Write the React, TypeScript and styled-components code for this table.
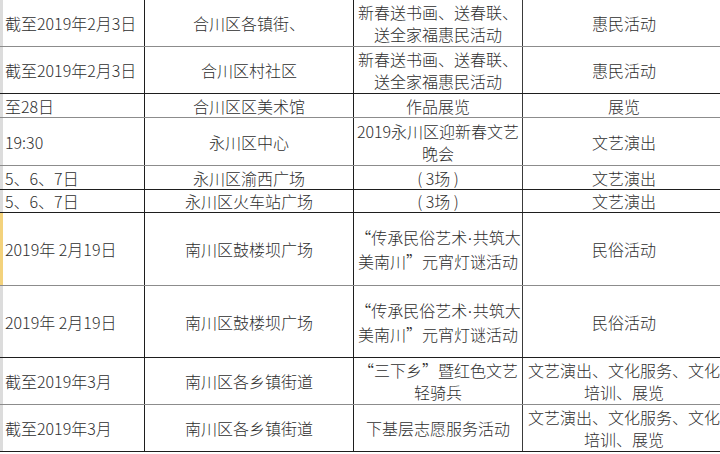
import React from 'react';
import styled, { createGlobalStyle } from 'styled-components';

const GlobalStyle = createGlobalStyle`
  html, body {
    margin: 0;
    padding: 0;
    background: #ffffff;
    overflow: hidden;
  }
  body {
    font-family: "Noto Sans CJK SC", "Noto Sans", sans-serif;
    color: #2e2e2e;
  }
`;

const Sheet = styled.div`
  width: 726px;
  margin-top: -1px;
  display: flex;
  flex-direction: column;
`;

const Row = styled.div<{ $h: number; $line: string }>`
  display: flex;
  height: ${(p) => p.$h}px;
  box-sizing: border-box;
  border-bottom: 1px solid ${(p) => p.$line};
`;

const Cell = styled.div<{ $w: number; $align?: 'left' | 'center'; $edge?: string }>`
  width: ${(p) => p.$w}px;
  flex: none;
  box-sizing: border-box;
  display: flex;
  flex-direction: column;
  justify-content: center;
  align-items: ${(p) => (p.$align === 'left' ? 'flex-start' : 'center')};
  padding-left: ${(p) => (p.$align === 'left' ? '2px' : '0')};
  border-right: 1px solid ${(p) => p.$edge ?? '#1e1e1e'};
  font-size: 16px;
  font-weight: 300;
  line-height: 22px;
  white-space: pre;
  text-align: center;
`;

const DateCell = styled(Cell)<{ $mark: string }>`
  border-left: 3px solid ${(p) => p.$mark};
`;

const Line = styled.span`
  display: block;
`;

// narrow Latin middle dot, as in the source sheet
const Dot = styled.span`
  font-family: "Liberation Sans", sans-serif;
`;

type Entry = {
  h: number;
  line: string;
  mark?: string;
  date: string;
  place: string;
  title: string[];
  kind: string[];
};

const GRAY = '#8c8c8c';
const DARK = '#1e1e1e';

const rows: Entry[] = [
  { h: 48, line: GRAY, date: '截至2019年2月3日', place: '合川区各镇街、', title: ['新春送书画、送春联、', '送全家福惠民活动'], kind: ['惠民活动'] },
  { h: 47, line: DARK, date: '截至2019年2月3日', place: '合川区村社区', title: ['新春送书画、送春联、', '送全家福惠民活动'], kind: ['惠民活动'] },
  { h: 24, line: GRAY, date: '至28日', place: '合川区区美术馆', title: ['作品展览'], kind: ['展览'] },
  { h: 48, line: GRAY, date: '19:30', place: '永川区中心', title: ['2019永川区迎新春文艺', '晚会'], kind: ['文艺演出'] },
  { h: 24, line: DARK, date: '5、6、7日', place: '永川区渝西广场', title: ['( 3场 )'], kind: ['文艺演出'] },
  { h: 23, line: DARK, date: '5、6、7日', place: '永川区火车站广场', title: ['( 3场 )'], kind: ['文艺演出'] },
  { h: 73, line: GRAY, mark: '#f3d27c', date: '2019年 2月19日', place: '南川区鼓楼坝广场', title: ['“传承民俗艺术·共筑大', '美南川”元宵灯谜活动'], kind: ['民俗活动'] },
  { h: 72, line: DARK, date: '2019年 2月19日', place: '南川区鼓楼坝广场', title: ['“传承民俗艺术·共筑大', '美南川”元宵灯谜活动'], kind: ['民俗活动'] },
  { h: 47, line: GRAY, date: '截至2019年3月', place: '南川区各乡镇街道', title: ['“三下乡”暨红色文艺', '轻骑兵'], kind: ['文艺演出、文化服务、文化', '培训、展览'] },
  { h: 47, line: DARK, date: '截至2019年3月', place: '南川区各乡镇街道', title: ['下基层志愿服务活动'], kind: ['文艺演出、文化服务、文化', '培训、展览'] },
];

const renderText = (t: string) => {
  const parts = t.split('·');
  return parts.map((p, i) => (
    <React.Fragment key={i}>
      {i > 0 && <Dot>·</Dot>}
      {p}
    </React.Fragment>
  ));
};

const Lines = ({ items }: { items: string[] }) => (
  <>
    {items.map((t) => (
      <Line key={t}>{renderText(t)}</Line>
    ))}
  </>
);

export default function App() {
  return (
    <>
      <GlobalStyle />
      <Sheet>
        {rows.map((r, i) => (
          <Row key={i} $h={r.h} $line={r.line}>
            <DateCell $w={145} $align="left" $mark={r.mark ?? '#dcdcdc'}>
              {r.date}
            </DateCell>
            <Cell $w={209}>{r.place}</Cell>
            <Cell $w={169} $edge="#3a3a3a">
              <Lines items={r.title} />
            </Cell>
            <Cell $w={203}>
              <Lines items={r.kind} />
            </Cell>
          </Row>
        ))}
      </Sheet>
    </>
  );
}
